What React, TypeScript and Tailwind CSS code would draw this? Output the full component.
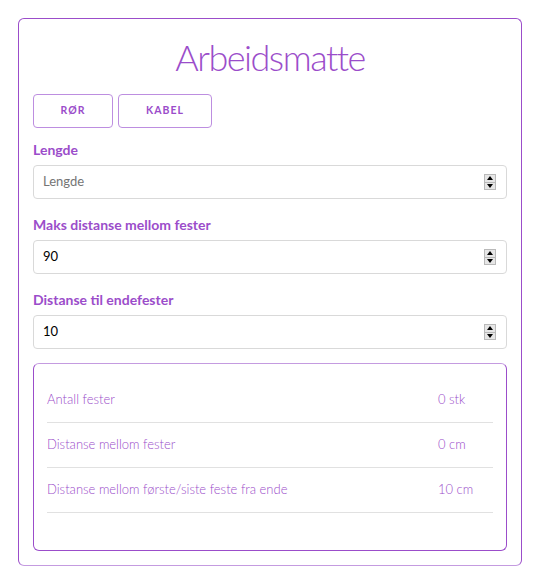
import { useState } from "react";

interface FieldProps {
  label: string;
  value: string;
  placeholder?: string;
  onChange: (v: string) => void;
}

const Spinner = () => (
  <div className="flex flex-col w-[12px] h-[16px] border border-[#b9b9b9] bg-[#e6e6e6]">
    <div className="flex-1 flex items-center justify-center border-b border-[#b9b9b9]">
      <div className="w-0 h-0 border-x-[3px] border-x-transparent border-b-[4px] border-b-black" />
    </div>
    <div className="flex-1 flex items-center justify-center">
      <div className="w-0 h-0 border-x-[3px] border-x-transparent border-t-[4px] border-t-black" />
    </div>
  </div>
);

const Field = ({ label, value, placeholder, onChange }: FieldProps) => (
  <div className="mt-[16px]">
    <label className="block h-5 leading-5 text-[14px] font-bold text-[#9b4dca]">
      {label}
    </label>
    <div className="mt-[5px] h-[34px] flex items-center border border-[#d9d9d9] rounded-[4px] pl-[9px] pr-[10px]">
      <input
        type="text"
        value={value}
        placeholder={placeholder}
        onChange={(e) => onChange(e.target.value)}
        className="flex-1 bg-transparent outline-none text-[13px] text-black placeholder:text-[#757575]"
      />
      <Spinner />
    </div>
  </div>
);

const rows = [
  { name: "Antall fester", value: "0 stk" },
  { name: "Distanse mellom fester", value: "0 cm" },
  { name: "Distanse mellom første/siste feste fra ende", value: "10 cm" },
];

export default function App() {
  const [lengde, setLengde] = useState("");
  const [maks, setMaks] = useState("90");
  const [ende, setEnde] = useState("10");

  return (
    <div className="bg-white min-h-[580px] pt-[18px] pl-[18px] font-['Lato',sans-serif]">
      <div className="w-[504px] h-[548px] border border-[#9b4dca] border-b-[#c49be0] rounded-[6px] px-[14px]">
        <h1 className="mt-[14px] h-12 leading-[48px] text-center text-[36px] font-light tracking-[-1.5px] text-[#9b4dca]">
          Arbeidsmatte
        </h1>

        <div className="mt-[13px] flex gap-[5px]">
          <button className="w-[80px] h-[34px] border border-[#bd8ee0] rounded-[4px] text-[10.5px] font-bold tracking-[1px] text-[#9b4dca]">
            RØR
          </button>
          <button className="w-[94px] h-[34px] border border-[#bd8ee0] rounded-[4px] text-[10.5px] font-bold tracking-[1px] text-[#9b4dca]">
            KABEL
          </button>
        </div>

        <div className="-mt-[4px]">
          <Field label="Lengde" value={lengde} placeholder="Lengde" onChange={setLengde} />
          <Field label="Maks distanse mellom fester" value={maks} onChange={setMaks} />
          <Field label="Distanse til endefester" value={ende} onChange={setEnde} />
        </div>

        <div className="mt-[14px] h-[188px] border border-[#9b4dca] border-t-[#c49be0] rounded-[6px] px-[13px] pt-[14px]">
          {rows.map((r) => (
            <div
              key={r.name}
              className="flex items-center h-[45px] border-b border-[#e1e1e1] text-[13px] font-light text-[#9b4dca]"
            >
              <span className="flex-1">{r.name}</span>
              <span className="w-[55px]">{r.value}</span>
            </div>
          ))}
        </div>
      </div>
    </div>
  );
}
